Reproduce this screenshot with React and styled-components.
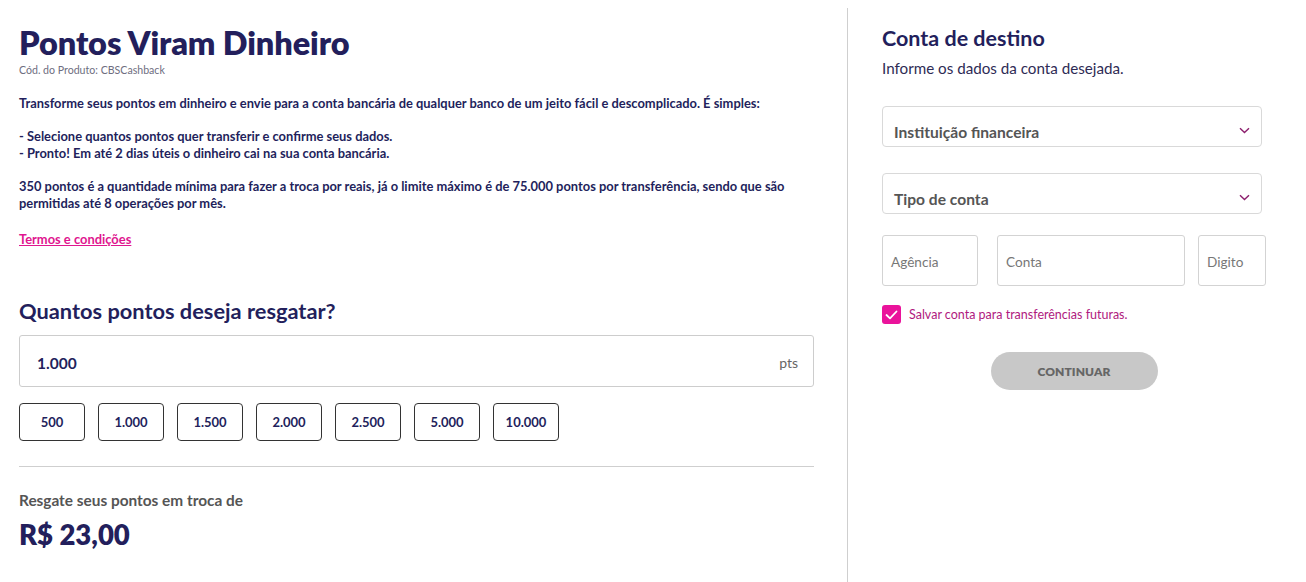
import React from "react";
import styled, { createGlobalStyle } from "styled-components";

const GlobalStyle = createGlobalStyle`
  html, body { margin: 0; padding: 0; background: #fff; }
  body { font-family: Lato, "Noto Sans", sans-serif; color: #231f5c; }
  * { box-sizing: border-box; }
`;

const Page = styled.div`
  display: flex;
  margin-top: 8px;
  min-height: 574px;
  width: 1306px;
`;

const LeftCol = styled.section`
  width: 848px;
  border-right: 1px solid #cfcfcf;
  padding: 15px 33px 0 19px;
`;

const RightCol = styled.section`
  width: 420px;
  padding: 17px 0 0 34px;
`;

const Title = styled.h1`
  margin: 0;
  font-size: 32.5px;
  line-height: 39px;
  font-weight: 800;
  color: #231f5c;
  letter-spacing: -0.1px;
`;

const Code = styled.div`
  margin-top: 1px;
  font-size: 10.6px;
  line-height: 14px;
  color: #6e6e80;
`;

const Desc = styled.div`
  margin-top: 18px;
  font-size: 12.9px;
  line-height: 16.6px;
  font-weight: 700;
  color: #231f5c;
  p { margin: 0 0 16.6px; }
`;

const TermsLink = styled.a`
  display: inline-block;
  font-size: 12.9px;
  font-weight: 700;
  color: #e0168f;
  text-decoration: underline;
  line-height: 16px;
`;

const SectionTitle = styled.h2`
  margin: 51px 0 11px;
  font-size: 21.8px;
  line-height: 26px;
  font-weight: 700;
  color: #231f5c;
`;

const PointsBox = styled.div`
  height: 52px;
  border: 1px solid #cdcdcd;
  border-radius: 3px;
  display: flex;
  align-items: center;
  justify-content: space-between;
  padding: 4px 15px 0 17px;
`;

const PointsValue = styled.span`
  font-size: 15.5px;
  font-weight: 700;
  color: #231f5c;
`;

const PointsUnit = styled.span`
  font-size: 14px;
  color: #666;
`;

const Chips = styled.div`
  display: flex;
  gap: 13px;
  margin-top: 16px;
`;

const Chip = styled.button`
  width: 66px;
  height: 38px;
  border: 1px solid #333;
  border-radius: 4px;
  background: #fff;
  font-family: inherit;
  font-size: 13px;
  font-weight: 700;
  color: #231f5c;
  padding: 0;
`;

const Divider = styled.hr`
  margin: 25px 0 0;
  border: 0;
  border-top: 1px solid #cfcfcf;
`;

const ResultLabel = styled.div`
  margin-top: 24px;
  font-size: 15.4px;
  font-weight: 700;
  color: #555;
  line-height: 18px;
`;

const ResultValue = styled.div`
  margin-top: 10px;
  font-size: 27.5px;
  font-weight: 800;
  color: #231f5c;
  line-height: 32px;
`;

const RightTitle = styled.h2`
  margin: 0;
  font-size: 21.5px;
  line-height: 26px;
  font-weight: 700;
  color: #231f5c;
`;

const RightSub = styled.div`
  margin-top: 8px;
  font-size: 15.2px;
  color: #2e2b55;
  line-height: 18px;
`;

const Select = styled.div`
  height: 41px;
  width: 380px;
  border: 1px solid #d9d9d9;
  border-radius: 4px;
  display: flex;
  align-items: center;
  justify-content: space-between;
  padding: 10px 11px 0 11px;
  margin-top: ${(p) => p.$mt}px;
`;

const SelectText = styled.span`
  font-size: 15.6px;
  font-weight: 700;
  color: #555;
`;

const Chevron = styled.svg`
  width: 11px;
  height: 7px;
  margin-top: -3px;
`;

const FieldRow = styled.div`
  display: flex;
  margin-top: 21px;
`;

const Field = styled.div`
  width: ${(p) => p.$w}px;
  margin-left: ${(p) => p.$ml || 0}px;
  height: 51px;
  border: 1px solid #d3d3d3;
  border-radius: 3px;
  display: flex;
  align-items: center;
  padding: 3px 0 0 8px;
  font-size: 13.6px;
  color: #777;
`;

const CheckRow = styled.label`
  display: flex;
  align-items: center;
  gap: 8px;
  margin-top: 19px;
`;

const CheckBox = styled.span`
  width: 19px;
  height: 19px;
  border-radius: 3px;
  background: #ea139b;
  display: flex;
  align-items: center;
  justify-content: center;
`;

const CheckLabel = styled.span`
  font-size: 12.5px;
  color: #b0197e;
`;

const ButtonWrap = styled.div`
  width: 384px;
  display: flex;
  justify-content: center;
  margin-top: 28px;
`;

const ContinueButton = styled.button`
  width: 167px;
  height: 38px;
  border-radius: 19px;
  border: 0;
  background: #c8c8c8;
  font-family: inherit;
  font-size: 12px;
  font-weight: 800;
  color: #666;
  letter-spacing: 0.1px;
  padding: 0;
`;

const ChevronIcon = () => (
  <Chevron viewBox="0 0 11 7">
    <path d="M1 1.2 L5.5 5.6 L10 1.2" fill="none" stroke="#8c1f6d" strokeWidth="1.4" />
  </Chevron>
);

const chips = ["500", "1.000", "1.500", "2.000", "2.500", "5.000", "10.000"];

export default function App() {
  return (
    <>
      <GlobalStyle />
      <Page>
        <LeftCol>
          <Title>Pontos Viram Dinheiro</Title>
          <Code>Cód. do Produto: CBSCashback</Code>
          <Desc>
            <p>
              Transforme seus pontos em dinheiro e envie para a conta bancária de qualquer banco de um jeito fácil e descomplicado. É simples:
            </p>
            <p>
              - Selecione quantos pontos quer transferir e confirme seus dados.
              <br />- Pronto! Em até 2 dias úteis o dinheiro cai na sua conta bancária.
            </p>
            <p>
              350 pontos é a quantidade mínima para fazer a troca por reais, já o limite máximo é de 75.000 pontos por transferência, sendo que são permitidas até 8 operações por mês.
            </p>
          </Desc>
          <TermsLink href="#">Termos e condições</TermsLink>
          <SectionTitle>Quantos pontos deseja resgatar?</SectionTitle>
          <PointsBox>
            <PointsValue>1.000</PointsValue>
            <PointsUnit>pts</PointsUnit>
          </PointsBox>
          <Chips>
            {chips.map((c) => (
              <Chip key={c}>{c}</Chip>
            ))}
          </Chips>
          <Divider />
          <ResultLabel>Resgate seus pontos em troca de</ResultLabel>
          <ResultValue>R$ 23,00</ResultValue>
        </LeftCol>
        <RightCol>
          <RightTitle>Conta de destino</RightTitle>
          <RightSub>Informe os dados da conta desejada.</RightSub>
          <Select $mt={29}>
            <SelectText>Instituição financeira</SelectText>
            <ChevronIcon />
          </Select>
          <Select $mt={26}>
            <SelectText>Tipo de conta</SelectText>
            <ChevronIcon />
          </Select>
          <FieldRow>
            <Field $w={96}>Agência</Field>
            <Field $w={188} $ml={19}>Conta</Field>
            <Field $w={68} $ml={13}>Digito</Field>
          </FieldRow>
          <CheckRow>
            <CheckBox>
              <svg width="13" height="10" viewBox="0 0 13 10">
                <path d="M1.5 5 L5 8.3 L11.5 1.5" fill="none" stroke="#fff" strokeWidth="1.8" strokeLinecap="round" strokeLinejoin="round" />
              </svg>
            </CheckBox>
            <CheckLabel>Salvar conta para transferências futuras.</CheckLabel>
          </CheckRow>
          <ButtonWrap>
            <ContinueButton>CONTINUAR</ContinueButton>
          </ButtonWrap>
        </RightCol>
      </Page>
    </>
  );
}
